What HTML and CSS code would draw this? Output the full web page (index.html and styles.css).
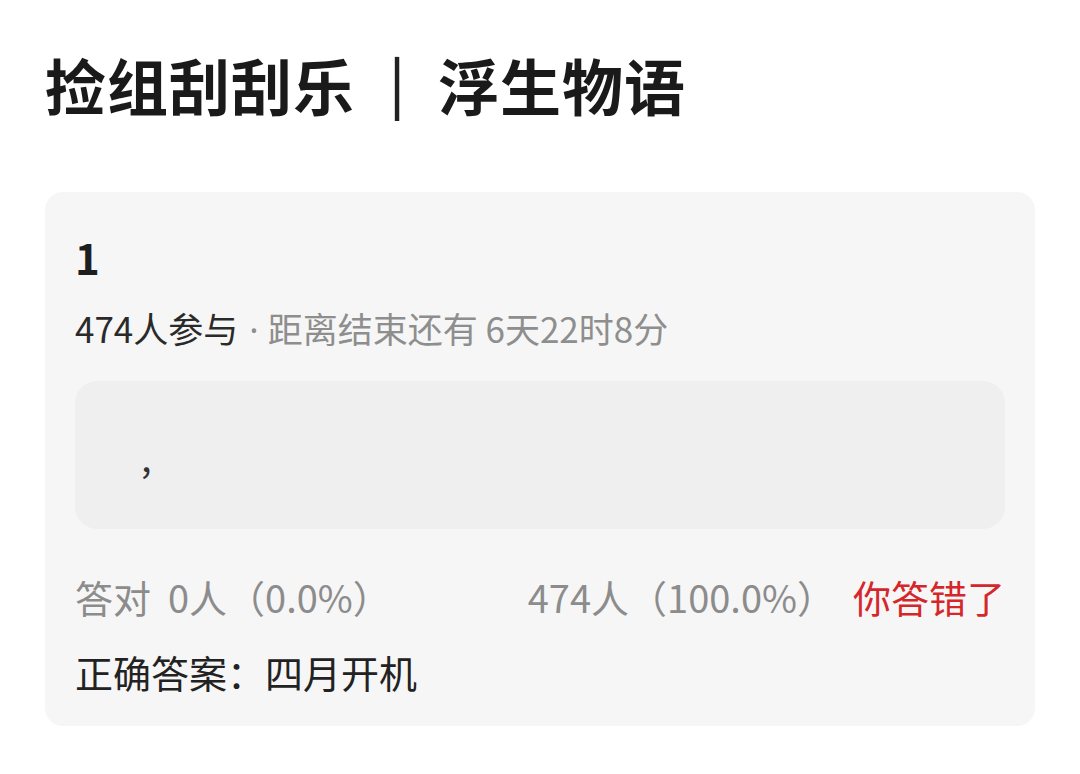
FILE: index.html
```html
<!DOCTYPE html>
<html lang="zh-CN">
<head>
    <meta charset="UTF-8">
    <meta name="viewport" content="width=device-width, initial-scale=1.0">
    <title>捡组刮刮乐</title>
    <link rel="stylesheet" href="styles.css">
</head>
<body>
    <h1 class="page-title">捡组刮刮乐<span class="sep">|</span>浮生物语</h1>

    <div class="quiz-card">
        <div class="quiz-num">1</div>
        <p class="quiz-meta">
            <span class="joined">474人参与</span><span class="dot">·</span>距离结束还有 6天22时8分
        </p>

        <div class="quiz-question">
            <span>,</span>
        </div>

        <div class="quiz-stats">
            <span class="stat-right">答对&nbsp;&nbsp;0人（0.0%）</span>
            <div class="stat-wrong">
                <span>474人（100.0%）</span>
                <span class="verdict">你答错了</span>
            </div>
        </div>

        <p class="quiz-answer">正确答案：四月开机</p>
    </div>
</body>
</html>
```

FILE: styles.css
```css
* {
    margin: 0;
    padding: 0;
    box-sizing: border-box;
}

body {
    font-family: "Noto Sans CJK SC", "Noto Sans", sans-serif;
    background-color: #ffffff;
    color: #222;
    padding: 43px 45px;
}

.page-title {
    font-size: 61px;
    font-weight: 700;
    line-height: 84px;
    letter-spacing: 1px;
    color: #1a1a1a;
}

.page-title .sep {
    display: inline-block;
    margin: 0 32px 0 34px;
    font-size: 57px;
    font-weight: 500;
    color: #222;
    transform: translateY(-6px);
}

.quiz-card {
    margin-top: 64px;
    background-color: #f6f6f6;
    border-radius: 18px;
    padding: 36px 30px 28px;
}

.quiz-num {
    font-size: 42px;
    font-weight: 700;
    line-height: 58px;
    color: #1e1e1e;
}

.quiz-meta {
    margin-top: 18px;
    font-size: 35px;
    line-height: 48px;
    color: #8e8e8e;
}

.quiz-meta .joined {
    color: #2a2a2a;
}

.quiz-meta .dot {
    font-family: "Noto Sans", sans-serif;
    margin: 0 9px 0 11px;
}

.quiz-question {
    margin-top: 27px;
    height: 148px;
    background-color: #efefef;
    border-radius: 22px;
    display: flex;
    align-items: center;
    padding-left: 66px;
    font-size: 38px;
    color: #333;
}

.quiz-stats {
    margin-top: 42px;
    display: flex;
    justify-content: space-between;
    font-size: 38px;
    line-height: 52px;
    color: #8c8c8c;
}

.stat-wrong {
    display: flex;
    gap: 18px;
}

.verdict {
    color: #d5262b;
}

.quiz-answer {
    margin-top: 23px;
    font-size: 38px;
    line-height: 52px;
    color: #222;
}
```
